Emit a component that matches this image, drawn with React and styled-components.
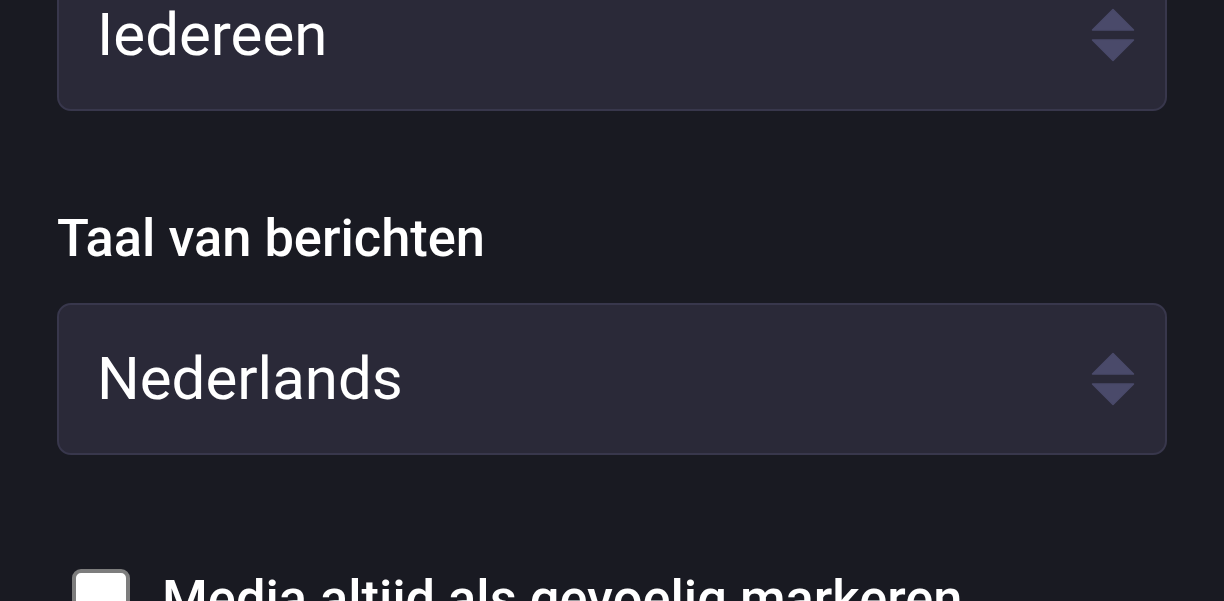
import styled, { createGlobalStyle } from "styled-components";

const GlobalStyle = createGlobalStyle`
    html, body {
        margin: 0;
        padding: 0;
        background-color: #191a22;
        overflow: hidden;
    }
    body {
        font-family: Roboto, "Noto Sans", sans-serif;
        color: #ffffff;
    }
`

function SelectArrows () {
    return (
        <svg width="44" height="54" viewBox="0 0 44 54">
            <path d="M22 1.5 L42.5 22 H1.5 Z" fill="#4a4a6a" strokeLinejoin="round" stroke="#4a4a6a" strokeWidth="1.5" />
            <path d="M1.5 32 H42.5 L22 52.5 Z" fill="#4a4a6a" strokeLinejoin="round" stroke="#4a4a6a" strokeWidth="1.5" />
        </svg>
    )
}

function SelectField ({ value }) {
    return (
        <SelectBox>
            <SelectValue>{value}</SelectValue>
            <SelectArrows />
        </SelectBox>
    )
}

export default function App () {
    return (
        <>
            <GlobalStyle />
            <Page>
                <SelectField value="Iedereen" />
                <Field>
                    <Label>Taal van berichten</Label>
                    <SelectField value="Nederlands" />
                </Field>
                <CheckRow>
                    <CheckBox />
                    <CheckLabel>Media altijd als gevoelig markeren</CheckLabel>
                </CheckRow>
            </Page>
        </>
    )
}

const Page = styled.div`
    display: flex;
    flex-direction: column;
    padding: 0 57px;
    margin-top: -41px;
`
const Field = styled.div`
    display: flex;
    flex-direction: column;
    margin-top: 97px;
`
const Label = styled.label`
    font-size: 52.4px;
    font-weight: 500;
    line-height: 60px;
    margin-bottom: 35px;
`
const SelectBox = styled.div`
    box-sizing: border-box;
    height: 152px;
    display: flex;
    align-items: center;
    justify-content: space-between;
    padding: 0 30px 0 38px;
    background-color: #2a2938;
    border: 2px solid #38374c;
    border-radius: 14px;
`
const SelectValue = styled.span`
    font-size: 60px;
    line-height: 1;
    color: #ffffff;
`
const CheckRow = styled.div`
    display: flex;
    align-items: flex-start;
    gap: 32px;
    margin-top: 114px;
    padding-left: 15px;
`
const CheckBox = styled.span`
    box-sizing: border-box;
    flex: none;
    width: 58px;
    height: 58px;
    background-color: #ffffff;
    border: 4px solid #7d7d7d;
    border-radius: 9px;
`
const CheckLabel = styled.span`
    font-size: 52.4px;
    font-weight: 500;
    line-height: 60px;
`
